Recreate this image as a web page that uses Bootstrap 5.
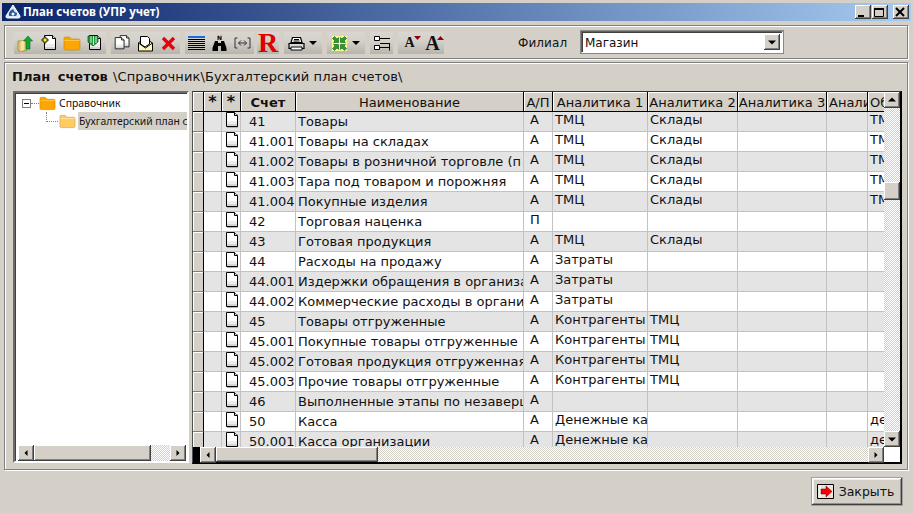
<!DOCTYPE html>
<html lang="ru">
<head>
<meta charset="utf-8">
<title>План счетов</title>
<link href="https://cdn.jsdelivr.net/npm/bootstrap@5.3.0/dist/css/bootstrap.min.css" rel="stylesheet">
<style>
html,body{height:100%;overflow:hidden}
body{background:#d4d0c8;color:#111;font:13px/1.2 "DejaVu Sans",sans-serif;width:913px;height:513px}
.win-title{margin:3px 2px 0;height:18px;width:909px;background:linear-gradient(90deg,#0a246a,#a6caf0);color:#fff;font:bold 11.500px/18px "Noto Sans",sans-serif;padding-left:3px}
.win-title svg{margin-right:2px}
.cap-btn{width:16px;height:14px;background:#d4d0c8;box-shadow:inset -1px -1px #404040,inset 1px 1px #fff,inset -2px -2px #808080;display:flex;align-items:center;justify-content:center}
.caps{margin-right:2px;gap:1px}
.groove{border:1px solid #808080;box-shadow:inset 1px 1px #fff,1px 1px #fff}
.tool-panel{margin:4px 0 0 4px;width:904px;height:34px;padding:6px 0 0 9px}
.tb-group{height:22px;background:linear-gradient(180deg,#d9d6cf,#d4d1ca 40%,#b7b4ad)}
.tb-btn{width:23px;height:22px;padding:0;border:0;border-radius:0;background:transparent;display:flex;align-items:center;justify-content:center;position:relative}
.tb-gap{margin-left:5px}
.tb-gap-s{margin-left:3px}
.tb-r{width:22px;font:bold 28px/22px "Liberation Serif",serif;color:#e00000}
.tb-wide{width:38px;justify-content:flex-start;padding-left:4px;gap:4px}
.tb-a{width:23px;font:bold 14px/22px "Liberation Serif",serif;color:#111;align-items:center}
.tb-a2{font-size:20px}
.drop-arrow{width:0;height:0;border:4px solid transparent;border-top-color:#000;border-bottom:0}
.branch-lbl{margin-left:74px;width:62px;color:#111;font-size:12px;letter-spacing:.1px}
.combo{width:204px;height:24px;margin-top:-2px;background:#fff;border:2px solid;border-color:#606060 #fff #fff #606060;outline:1px solid #888;outline-offset:-1px;padding:2px 2px 0 3px;box-shadow:inset 1px 1px #404040}
.combo-txt{font-size:12px;line-height:18px}
.sbtn{width:16px;height:16px;flex:none;background:#d4d0c8;box-shadow:inset -1px -1px #404040,inset 1px 1px #fff,inset -2px -2px #808080;display:flex;align-items:center;justify-content:center}
.main-panel{margin:3px 0 0 4px;width:904px;height:408px;padding:0 0 0 8px}
.path-line{height:28px;padding:6px 0 0 0;margin-left:-1px;white-space:nowrap;font-size:13px;letter-spacing:.1px}
.path-line b{font-size:13px;margin-right:1px;word-spacing:3px;letter-spacing:0}
.tree-box{width:176px;height:372px;background:#fff;border:2px solid;border-color:#6c6c6c #fff #fff #6c6c6c;box-shadow:inset 1px 1px #404040}
.tree-list{font:10.400px/18px "Noto Sans",sans-serif;padding:1px 0 0 7px;white-space:nowrap;overflow:hidden}
.tree-row{height:18px}
.tree-minus{width:9px;height:9px;border:1px solid #808080;flex:none;position:relative;background:#fff}
.tree-minus::after{content:"";position:absolute;left:1px;right:1px;top:3px;height:1px;background:#000}
.dot-h{width:8px;border-top:1px dotted #808080;flex:none}
.dot-l{width:12px;height:10px;margin:-9px 1px 0 24px;border-left:1px dotted #808080;border-bottom:1px dotted #808080;flex:none}
.fold-first{margin-right:3px;flex:none}
.fold-second{margin-right:2px;flex:none}
.tree-sel{background:#d4d0c8;padding-left:1px;flex:1;overflow:hidden}
.hs{height:16px;padding:0 1px 0 3px}
.hs-track{background-color:#fff;background-image:conic-gradient(#d4d0c8 25%,#fff 0 50%,#d4d0c8 0 75%,#fff 0);background-size:2px 2px}
.thumb{background:#d4d0c8;box-shadow:inset -1px -1px #404040,inset 1px 1px #fff,inset -2px -2px #808080}
.grid-frame{width:710px;height:373px;margin-left:3px;background:#fff;border-style:solid;border-color:#303030 #000 #000 #505050;border-width:1px 2px 2px 1px}
.grid-view{width:691px;height:355px;overflow:hidden}
.grid-tbl{table-layout:fixed;width:735px;margin:0;border-collapse:separate;border-spacing:0;font-size:13px;color:#111;--bs-table-bg:transparent}
.grid-tbl th,.grid-tbl td{padding:0;border:0;white-space:nowrap;overflow:hidden;box-shadow:none;color:#111}
.grid-tbl thead th{height:20px;padding-top:2px;background:#d4d0c8;border-right:1px solid #000;border-bottom:1px solid #000;font-weight:400;line-height:17px;text-align:center;vertical-align:top;box-shadow:inset 1px 1px #fff}
.grid-tbl thead th.left-h{text-align:left;padding-left:2px}
.grid-tbl thead th.star{font-weight:700;font-size:16px;line-height:19px;padding-top:0}
.grid-tbl td{height:20px;border-right:1px solid #c2c2c2;border-bottom:1px solid #c2c2c2;line-height:18px;background:#fff;padding-left:2px;vertical-align:top}
.grid-tbl tbody tr:nth-child(odd) td{background:#e4e4e4}
.grid-tbl td.ind,.grid-tbl tbody tr:nth-child(odd) td.ind{background:#d4d0c8;border-right:1px solid #000;border-bottom:1px solid #808080;box-shadow:inset 1px 1px #fff;padding:0}
.grid-tbl td.ico{padding:0 0 0 3px;line-height:0}
.grid-tbl td.acc{padding-left:8px;padding-top:1px}
.grid-tbl td.nm{padding-top:1px}
.grid-tbl td.ctr{padding-left:6px;line-height:16px}
.grid-tbl td.an{line-height:16px}
.vs{width:16px;height:355px}
.vs-thumb{height:18px;margin-top:74px;flex:none}
.hs-grid{height:15px}
.hs-corner{width:7px;background:#000;flex:none}
.corner{width:16px;flex:none;background:#fff}
.foot{padding:8px 11px 0 0}
.close-btn{width:90px;height:27px;padding:0 3px 0 0;border:0;border-radius:0;background:#d4d0c8;color:#111;font:12.500px/27px "DejaVu Sans",sans-serif;box-shadow:inset -1px -1px #404040,inset 1px 1px #fff,inset -2px -2px #909090,inset 2px 2px #eee,0 0 0 1px #a0a0a0;display:flex;align-items:center;justify-content:center;gap:5px}
.n-mark{font:bold 6px/1 "DejaVu Sans",sans-serif}
</style>
</head>
<body>
<svg width="0" height="0" class="position-absolute">
<defs>
<symbol id="doc" viewBox="0 0 15 17"><path d="M2 2h11v14H2z" fill="#b4b4b4"/><path d="M1.500 .5h8l3 3v11h-11z" fill="#fff"/><path d="M2 9h10v5H2z" fill="#ececec"/><path d="M2 12h10v2H2z" fill="#d4d4d4"/><path d="M1.500 .5h8l3 3v11h-11z" fill="none" stroke="#000"/><path d="M9.500 .5v3h3" fill="#ddd" stroke="#000"/></symbol>
<symbol id="fold" viewBox="0 0 18 16"><path d="M1 3.500q0-1.500 1.500-1.500h4l2 2h7q1.500 0 1.500 1.500v8q0 1.500-1.500 1.500h-13q-1.500 0-1.500-1.500z" fill="#fda500" stroke="#c88400" stroke-width=".6"/><path d="M1.500 5h15v1h-15z" fill="#ffc63f"/></symbol>
<symbol id="foldl" viewBox="0 0 18 16"><path d="M1 3.500q0-1.500 1.500-1.500h4l2 2h7q1.500 0 1.500 1.500v8q0 1.500-1.500 1.500h-13q-1.500 0-1.500-1.500z" fill="#ffcb63" stroke="#c8964c" stroke-width=".6"/><path d="M1.500 5h15v1h-15z" fill="#ffe4a0"/></symbol>
<symbol id="la" viewBox="0 0 8 8"><path d="M5.500 1v6l-3-3z" fill="#000"/></symbol>
<symbol id="ra" viewBox="0 0 8 8"><path d="M2.500 1v6l3-3z" fill="#000"/></symbol>
<symbol id="ua" viewBox="0 0 8 8"><path d="M0 5.500h8l-4-4z" fill="#000"/></symbol>
<symbol id="da" viewBox="0 0 8 8"><path d="M0 2.500h8l-4 4z" fill="#000"/></symbol>
<symbol id="arw" viewBox="0 0 17 17"><path d="M7.500 7.500v-5L6 4 3.500 1.500l-2 2L4 6 2.500 7.500z" fill="#1f9f3c" stroke="#0d5c20" stroke-width=".6"/></symbol>
</defs>
</svg>

<div class="win-title d-flex align-items-center justify-content-between">
  <div class="d-flex align-items-center">
    <svg width="16" height="16" viewBox="0 0 16 16"><path d="M8 1 1 12q-.5 2 1.500 2h11q2 0 1.500-2z" fill="#dbe8f8" stroke="#fff"/><path d="M4 12q-1-5 4-7 1 3 4 4 0 3-1 3z" fill="#2a5ba8"/><circle cx="8" cy="10" r="1.500" fill="#fff"/></svg>
    <span>План счетов (УПР учет)</span>
  </div>
  <div class="d-flex caps">
    <div class="cap-btn"><svg width="10" height="10"><path d="M1 8h6v2H1z"/></svg></div>
    <div class="cap-btn"><svg width="12" height="10"><path d="M1.500 1.500h9v8h-9z" fill="none" stroke="#000"/><path d="M1 1h10v2H1z"/></svg></div>
    <div class="cap-btn ms-1"><svg width="10" height="10"><path d="m1 1 8 8M9 1 1 9" stroke="#000" stroke-width="2"/></svg></div>
  </div>
</div>

<div class="tool-panel groove d-flex">
  <div class="tb-group d-flex">
    <button class="tb-btn btn"><svg width="17" height="17" viewBox="0 0 17 17"><path d="M1 6h9v9l-7 2-2-2z" fill="#ecd27c" stroke="#a88c3c"/><path d="M3 6l5-1v10l-5 2z" fill="#f6e49c" stroke="#b89c4c" stroke-width=".6"/><path d="M11 1 6.500 6H9v8h4V6h2.500z" fill="#15a530" stroke="#0c6a1c" stroke-width=".6"/></svg></button>
    <button class="tb-btn btn"><svg width="18" height="17" viewBox="0 0 18 17"><use href="#doc" x="3" width="15" height="17"/><path d="M4 2h2v2h2v2H6v2H4V6H2V4h2z" fill="#ffef2c" stroke="#000" stroke-width=".8"/></svg></button>
    <button class="tb-btn btn"><svg width="18" height="16"><use href="#fold" width="18" height="16"/></svg></button>
    <button class="tb-btn btn"><svg width="17" height="17" viewBox="0 0 17 17"><use href="#doc" x="2" width="15" height="17"/><path d="M2 1h10v6l-5 4-5-4z" fill="#1f9a3c" stroke="#0a4a18" stroke-width=".7"/><path d="M5 1v7M7.500 1v9M10 1v7" stroke="#d8f0d8"/></svg></button>
  </div>
  <div class="tb-group tb-gap d-flex">
    <button class="tb-btn btn"><svg width="17" height="16" viewBox="0 0 17 16"><use href="#doc" x="5" y="0" width="12" height="14"/><use href="#doc" y="2" width="12" height="14"/></svg></button>
    <button class="tb-btn btn"><svg width="17" height="17" viewBox="0 0 17 17"><path d="M1.500 8v8h14V8l-3-2h-9z" fill="#fdf6b4" stroke="#000"/><path d="M3.500 9V1.500h7l2 2V9l-4.500 3z" fill="#fff" stroke="#000"/><path d="m1.500 8 7 5 7-5" fill="none" stroke="#000"/></svg></button>
    <button class="tb-btn btn"><svg width="15" height="15" viewBox="0 0 15 15"><path d="m2 2 11 11M13 2 2 13" stroke="#e8000c" stroke-width="3.400"/></svg></button>
  </div>
  <div class="tb-group tb-gap d-flex">
    <button class="tb-btn btn"><svg width="17" height="15" viewBox="0 0 17 15"><path d="M0 0h17v2H0z" fill="#1a6ce0"/><path d="M0 3.500h17M0 5.500h17M0 7.500h17M0 9.500h17M0 11.500h17M0 13.500h17" stroke="#000"/></svg></button>
    <button class="tb-btn btn"><svg width="15" height="18" viewBox="0 0 15 18"><text x="7.500" y="6" text-anchor="middle" class="n-mark">N</text><path d="M3 7h3v2h3V7h3l2.500 7v3H9v-5H6v5H.5v-3z"/></svg></button>
    <button class="tb-btn btn"><svg width="17" height="12" viewBox="0 0 17 12"><path d="M3.500 1H1v10h2.500M13.500 1H16v10h-2.500M4.500 6h8M7 3.500 4.500 6 7 8.500M10 3.500 12.500 6 10 8.500" fill="none" stroke="#303040"/></svg></button>
  </div>
  <div class="tb-group tb-gap-s d-flex">
    <button class="tb-btn tb-r btn">R</button>
  </div>
  <div class="tb-group tb-gap d-flex">
    <button class="tb-btn tb-wide btn"><svg width="17" height="15" viewBox="0 0 17 15"><path d="M4.500 1.500h8l1.500 5H3z" fill="#fff" stroke="#000" stroke-width="1.200"/><path d="M1 7.500h15v5H1z" fill="#d8d8d8" stroke="#000" stroke-width="1.200"/><path d="M3 11h11v3H3z" fill="#fff" stroke="#000"/><path d="M11 9h3v1h-3z" fill="#ffe000"/><path d="M6 3.500h5M5.500 5h6" stroke="#000"/></svg><span class="drop-arrow"></span></button>
  </div>
  <div class="tb-group tb-gap d-flex">
    <button class="tb-btn tb-wide btn"><svg width="17" height="17" viewBox="0 0 17 17"><path d="M1 1h15v15H1z" fill="#fffa8c"/><use href="#arw" width="17" height="17"/><use href="#arw" width="17" height="17" transform="matrix(-1 0 0 1 17 0)"/><use href="#arw" width="17" height="17" transform="matrix(1 0 0 -1 0 17)"/><use href="#arw" width="17" height="17" transform="matrix(-1 0 0 -1 17 17)"/></svg><span class="drop-arrow"></span></button>
  </div>
  <div class="tb-group tb-gap d-flex">
    <button class="tb-btn btn"><svg width="16" height="16" viewBox="0 0 16 16"><path d="M.5 1.500h5v4h-5zM.5 10.500h5v4h-5z" fill="#fff" stroke="#000"/><path d="M6 3.500h10M6 8.500h10M6 12.500h10M15.500 8.500v7" stroke="#000"/></svg></button>
  </div>
  <div class="tb-group tb-gap d-flex">
    <button class="tb-btn tb-a btn">A<svg class="position-absolute top-0 end-0 mt-1" width="7" height="4"><path d="M0 0h7L3.500 4z" fill="#900010"/></svg></button>
    <button class="tb-btn tb-a tb-a2 btn">A<svg class="position-absolute top-0 end-0 mt-1" width="7" height="4"><path d="M0 4h7L3.500 0z" fill="#900010"/></svg></button>
  </div>
  <div class="branch-lbl pt-1">Филиал</div>
  <div class="combo d-flex justify-content-between">
    <span class="combo-txt">Магазин</span>
    <div class="sbtn"><svg width="8" height="8"><use href="#da" width="8" height="8"/></svg></div>
  </div>
</div>

<div class="main-panel groove">
  <div class="path-line"><b>План счетов</b> \Справочник\Бухгалтерский план счетов\</div>
  <div class="d-flex">
    <div class="tree-box d-flex flex-column justify-content-between">
      <div class="tree-list">
        <div class="tree-row d-flex align-items-center">
          <span class="tree-minus"></span><span class="dot-h"></span>
          <svg class="fold-first" width="17" height="16"><use href="#fold" width="17" height="16"/></svg>
          <span>Справочник</span>
        </div>
        <div class="tree-row d-flex align-items-center">
          <span class="dot-l"></span>
          <svg class="fold-second" width="17" height="16"><use href="#foldl" width="17" height="16"/></svg>
          <span class="tree-sel">Бухгалтерский план счетов</span>
        </div>
      </div>
      <div class="hs d-flex">
        <div class="sbtn"><svg width="8" height="8"><use href="#la" width="8" height="8"/></svg></div>
        <div class="thumb" style="width:117px"></div>
        <div class="hs-track flex-grow-1"></div>
        <div class="sbtn"><svg width="8" height="8"><use href="#ra" width="8" height="8"/></svg></div>
      </div>
    </div>
    <div class="grid-frame d-flex flex-column">
      <div class="d-flex">
        <div class="grid-view">
          <table class="table grid-tbl">
            <colgroup><col style="width:11px"><col style="width:18px"><col style="width:19px"><col style="width:55px"><col style="width:228px"><col style="width:29px"><col style="width:95px"><col style="width:90px"><col style="width:89px"><col style="width:41px"><col style="width:60px"></colgroup>
            <thead><tr><th></th><th class="star">*</th><th class="star">*</th><th class="fw-bold">Счет</th><th>Наименование</th><th>А/П</th><th>Аналитика 1</th><th>Аналитика 2</th><th>Аналитика 3</th><th class="left-h">Аналитика 4</th><th class="left-h">Об</th></tr></thead>
            <tbody>
<tr><td class="ind"></td><td></td><td class="ico"><svg width="15" height="17"><use href="#doc" width="15" height="17"/></svg></td><td class="acc">41</td><td class="nm">Товары</td><td class="ctr">А</td><td class="an">ТМЦ</td><td class="an">Склады</td><td></td><td></td><td class="an">ТМЦ</td></tr>
<tr><td class="ind"></td><td></td><td class="ico"><svg width="15" height="17"><use href="#doc" width="15" height="17"/></svg></td><td class="acc">41.001</td><td class="nm">Товары на складах</td><td class="ctr">А</td><td class="an">ТМЦ</td><td class="an">Склады</td><td></td><td></td><td class="an">ТМЦ</td></tr>
<tr><td class="ind"></td><td></td><td class="ico"><svg width="15" height="17"><use href="#doc" width="15" height="17"/></svg></td><td class="acc">41.002</td><td class="nm">Товары в розничной торговле (п</td><td class="ctr">А</td><td class="an">ТМЦ</td><td class="an">Склады</td><td></td><td></td><td class="an">ТМЦ</td></tr>
<tr><td class="ind"></td><td></td><td class="ico"><svg width="15" height="17"><use href="#doc" width="15" height="17"/></svg></td><td class="acc">41.003</td><td class="nm">Тара под товаром и порожняя</td><td class="ctr">А</td><td class="an">ТМЦ</td><td class="an">Склады</td><td></td><td></td><td class="an">ТМЦ</td></tr>
<tr><td class="ind"></td><td></td><td class="ico"><svg width="15" height="17"><use href="#doc" width="15" height="17"/></svg></td><td class="acc">41.004</td><td class="nm">Покупные изделия</td><td class="ctr">А</td><td class="an">ТМЦ</td><td class="an">Склады</td><td></td><td></td><td class="an">ТМЦ</td></tr>
<tr><td class="ind"></td><td></td><td class="ico"><svg width="15" height="17"><use href="#doc" width="15" height="17"/></svg></td><td class="acc">42</td><td class="nm">Торговая наценка</td><td class="ctr">П</td><td></td><td></td><td></td><td></td><td></td></tr>
<tr><td class="ind"></td><td></td><td class="ico"><svg width="15" height="17"><use href="#doc" width="15" height="17"/></svg></td><td class="acc">43</td><td class="nm">Готовая продукция</td><td class="ctr">А</td><td class="an">ТМЦ</td><td class="an">Склады</td><td></td><td></td><td></td></tr>
<tr><td class="ind"></td><td></td><td class="ico"><svg width="15" height="17"><use href="#doc" width="15" height="17"/></svg></td><td class="acc">44</td><td class="nm">Расходы на продажу</td><td class="ctr">А</td><td class="an">Затраты</td><td></td><td></td><td></td><td></td></tr>
<tr><td class="ind"></td><td></td><td class="ico"><svg width="15" height="17"><use href="#doc" width="15" height="17"/></svg></td><td class="acc">44.001</td><td class="nm">Издержки обращения в организа</td><td class="ctr">А</td><td class="an">Затраты</td><td></td><td></td><td></td><td></td></tr>
<tr><td class="ind"></td><td></td><td class="ico"><svg width="15" height="17"><use href="#doc" width="15" height="17"/></svg></td><td class="acc">44.002</td><td class="nm">Коммерческие расходы в органи</td><td class="ctr">А</td><td class="an">Затраты</td><td></td><td></td><td></td><td></td></tr>
<tr><td class="ind"></td><td></td><td class="ico"><svg width="15" height="17"><use href="#doc" width="15" height="17"/></svg></td><td class="acc">45</td><td class="nm">Товары отгруженные</td><td class="ctr">А</td><td class="an">Контрагенты</td><td class="an">ТМЦ</td><td></td><td></td><td></td></tr>
<tr><td class="ind"></td><td></td><td class="ico"><svg width="15" height="17"><use href="#doc" width="15" height="17"/></svg></td><td class="acc">45.001</td><td class="nm">Покупные товары отгруженные</td><td class="ctr">А</td><td class="an">Контрагенты</td><td class="an">ТМЦ</td><td></td><td></td><td></td></tr>
<tr><td class="ind"></td><td></td><td class="ico"><svg width="15" height="17"><use href="#doc" width="15" height="17"/></svg></td><td class="acc">45.002</td><td class="nm">Готовая продукция отгруженная</td><td class="ctr">А</td><td class="an">Контрагенты</td><td class="an">ТМЦ</td><td></td><td></td><td></td></tr>
<tr><td class="ind"></td><td></td><td class="ico"><svg width="15" height="17"><use href="#doc" width="15" height="17"/></svg></td><td class="acc">45.003</td><td class="nm">Прочие товары отгруженные</td><td class="ctr">А</td><td class="an">Контрагенты</td><td class="an">ТМЦ</td><td></td><td></td><td></td></tr>
<tr><td class="ind"></td><td></td><td class="ico"><svg width="15" height="17"><use href="#doc" width="15" height="17"/></svg></td><td class="acc">46</td><td class="nm">Выполненные этапы по незаверш</td><td class="ctr">А</td><td></td><td></td><td></td><td></td><td></td></tr>
<tr><td class="ind"></td><td></td><td class="ico"><svg width="15" height="17"><use href="#doc" width="15" height="17"/></svg></td><td class="acc">50</td><td class="nm">Касса</td><td class="ctr">А</td><td class="an">Денежные кар</td><td></td><td></td><td></td><td class="an">де</td></tr>
<tr><td class="ind"></td><td></td><td class="ico"><svg width="15" height="17"><use href="#doc" width="15" height="17"/></svg></td><td class="acc">50.001</td><td class="nm">Касса организации</td><td class="ctr">А</td><td class="an">Денежные кар</td><td></td><td></td><td></td><td class="an">де</td></tr>
            </tbody>
          </table>
        </div>
        <div class="vs hs-track d-flex flex-column">
          <div class="sbtn"><svg width="8" height="8"><use href="#ua" width="8" height="8"/></svg></div>
          <div class="thumb vs-thumb"></div>
          <div class="sbtn mt-auto"><svg width="8" height="8"><use href="#da" width="8" height="8"/></svg></div>
        </div>
      </div>
      <div class="hs-grid d-flex">
        <div class="hs-corner"></div>
        <div class="sbtn hs-b"><svg width="8" height="8"><use href="#la" width="8" height="8"/></svg></div>
        <div class="thumb" style="width:162px"></div>
        <div class="hs-track flex-grow-1"></div>
        <div class="sbtn hs-b"><svg width="8" height="8"><use href="#ra" width="8" height="8"/></svg></div>
        <div class="corner"></div>
      </div>
    </div>
  </div>
</div>

<div class="foot d-flex justify-content-end">
  <button class="btn close-btn"><svg width="17" height="15" viewBox="0 0 17 15"><path d="M.5 .5h16v14H.5z" fill="#e8e4dc" stroke="#000"/><path d="M3 1v13" stroke="#fff"/><path d="M4 5h5V2l6 5.500-6 5.500v-3H4z" fill="#f00000" stroke="#700" stroke-width=".5"/></svg><span>Закрыть</span></button>
</div>
</body>
</html>
